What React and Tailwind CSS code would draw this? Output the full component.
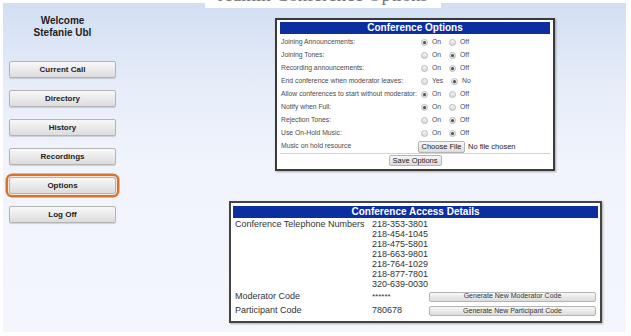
const navItems = ["Current Call", "Directory", "History", "Recordings", "Options", "Log Off"];

const optionRows = [
  { label: "Joining Announcements:", a: "On", b: "Off", on: 0 },
  { label: "Joining Tones:", a: "On", b: "Off", on: 1 },
  { label: "Recording announcements:", a: "On", b: "Off", on: 1 },
  { label: "End conference when moderator leaves:", a: "Yes", b: "No", on: 1 },
  { label: "Allow conferences to start without moderator:", a: "On", b: "Off", on: 0 },
  { label: "Notify when Full:", a: "On", b: "Off", on: 0 },
  { label: "Rejection Tones:", a: "On", b: "Off", on: 1 },
  { label: "Use On-Hold Music:", a: "On", b: "Off", on: 1 },
];

const phoneNumbers = [
  "218-353-3801",
  "218-454-1045",
  "218-475-5801",
  "218-663-9801",
  "218-764-1029",
  "218-877-7801",
  "320-639-0030",
];

const Radio = ({ checked }) => (
  <span className="w-[7px] h-[7px] rounded-full border border-[#b9b9b9] bg-gradient-to-b from-[#f6f6f6] to-[#dadada] flex items-center justify-center shrink-0">
    {checked && <span className="w-[3px] h-[3px] rounded-full bg-[#4a4a4a]" />}
  </span>
);

const GrayButton = ({ children, className = "" }) => (
  <div
    className={`flex items-center justify-center border border-[#b4b4b4] rounded-[2px] bg-gradient-to-b from-[#f8f8f8] to-[#dcdcdc] text-[#222] ${className}`}
  >
    {children}
  </div>
);

const App = () => {
  return (
    <div className="relative w-[631px] h-[336px] bg-white overflow-hidden font-['Liberation_Sans',Arial,sans-serif]">
      {/* page title, cut off at top */}
      <div className="absolute left-[205px] top-0 w-[236px] h-[8px] bg-white overflow-hidden z-10">
        <div className="mt-[-15px] text-center text-[19px] leading-[20px] text-[#777] font-['Liberation_Serif',serif] whitespace-nowrap">
          Admin Conference Options
        </div>
      </div>

      <div className="ml-[3px] mt-[3px] w-[623px] h-[329px] bg-[linear-gradient(to_bottom,#d2def2_0%,#e6edf9_25%,#f1f4fc_50%,#f3f6fd_100%)] flex">
        {/* Sidebar */}
        <div className="pl-[6px] w-[113px] flex flex-col">
          <div className="pt-[12px] text-center text-[10px] leading-[11.5px] font-bold text-[#222]">
            <div>Welcome</div>
            <div>Stefanie Ubl</div>
          </div>
          <div className="mt-[23px] flex flex-col gap-[12px]">
            {navItems.map((item) => (
              <GrayButton
                key={item}
                className={`w-[107px] h-[17px] text-[8px] font-bold shadow-[0_1px_1px_rgba(0,0,0,0.15)] ${
                  item === "Options"
                    ? "ring-[2.5px] ring-[#d7732b] ring-offset-[1px] ring-offset-[#f3e4d6] rounded-[3px]"
                    : ""
                }`}
              >
                {item}
              </GrayButton>
            ))}
          </div>
        </div>

        {/* Main */}
        <div className="flex flex-col">
          {/* Conference Options */}
          <div className="ml-[159px] mt-[15px] w-[280px] border-2 border-[#3a3a3a] bg-white px-[3px] pt-[2px] pb-[3px] shadow-[1px_1px_2px_rgba(0,0,0,0.3)]">
            <div className="h-[12px] bg-[#0b2f9f] text-white text-[10px] font-bold leading-[12px] text-center">
              Conference Options
            </div>
            <div className="mt-[2px] text-[6.8px] text-[#4a4a4a]">
              {optionRows.map((row) => (
                <div key={row.label} className="h-[13px] flex items-center">
                  <div className="w-[138px] pl-[1px] whitespace-nowrap">{row.label}</div>
                  <div className="flex items-center pl-[3px]">
                    <Radio checked={row.on === 0} />
                    <span className="ml-[4px]">{row.a}</span>
                    <span className="ml-[8px]">
                      <Radio checked={row.on === 1} />
                    </span>
                    <span className="ml-[4px]">{row.b}</span>
                  </div>
                </div>
              ))}
              <div className="h-[13px] flex items-center">
                <div className="w-[138px] pl-[1px]">Music on hold resource</div>
                <GrayButton className="w-[47px] h-[12px] text-[7.5px]">Choose File</GrayButton>
                <span className="ml-[3px] text-[7.5px] text-[#222]">No file chosen</span>
              </div>
            </div>
            <div className="border-t border-[#d4d4d4] pt-[1px] flex justify-center">
              <GrayButton className="w-[53px] h-[11px] text-[7.5px]">Save Options</GrayButton>
            </div>
          </div>

          {/* Conference Access Details */}
          <div className="ml-[113px] mt-[30px] w-[373px] border-2 border-[#444] bg-white px-[2px] pt-[3px] pb-[3px] shadow-[1px_1px_2px_rgba(0,0,0,0.3)]">
            <div className="h-[12px] bg-[#0b2f9f] text-white text-[10px] font-bold leading-[12px] text-center">
              Conference Access Details
            </div>
            <div className="mt-[1px] px-[2px] text-[9px] text-[#333]">
              <div className="grid grid-cols-[137px_57px_167px] leading-[10px]">
                <div>Conference Telephone Numbers</div>
                <div className="col-span-2">
                  {phoneNumbers.map((n) => (
                    <div key={n}>{n}</div>
                  ))}
                </div>
              </div>
              <div className="grid grid-cols-[137px_57px_167px] h-[15px] items-center">
                <div>Moderator Code</div>
                <div className="text-[8px] leading-[8px] pt-[1px]">******</div>
                <GrayButton className="h-[10px] text-[7px] text-[#333]">Generate New Moderator Code</GrayButton>
              </div>
              <div className="grid grid-cols-[137px_57px_167px] h-[14px] items-center">
                <div>Participant Code</div>
                <div>780678</div>
                <GrayButton className="h-[10px] text-[7px] text-[#333]">Generate New Participant Code</GrayButton>
              </div>
            </div>
          </div>
        </div>
      </div>
    </div>
  );
};

export default App;
